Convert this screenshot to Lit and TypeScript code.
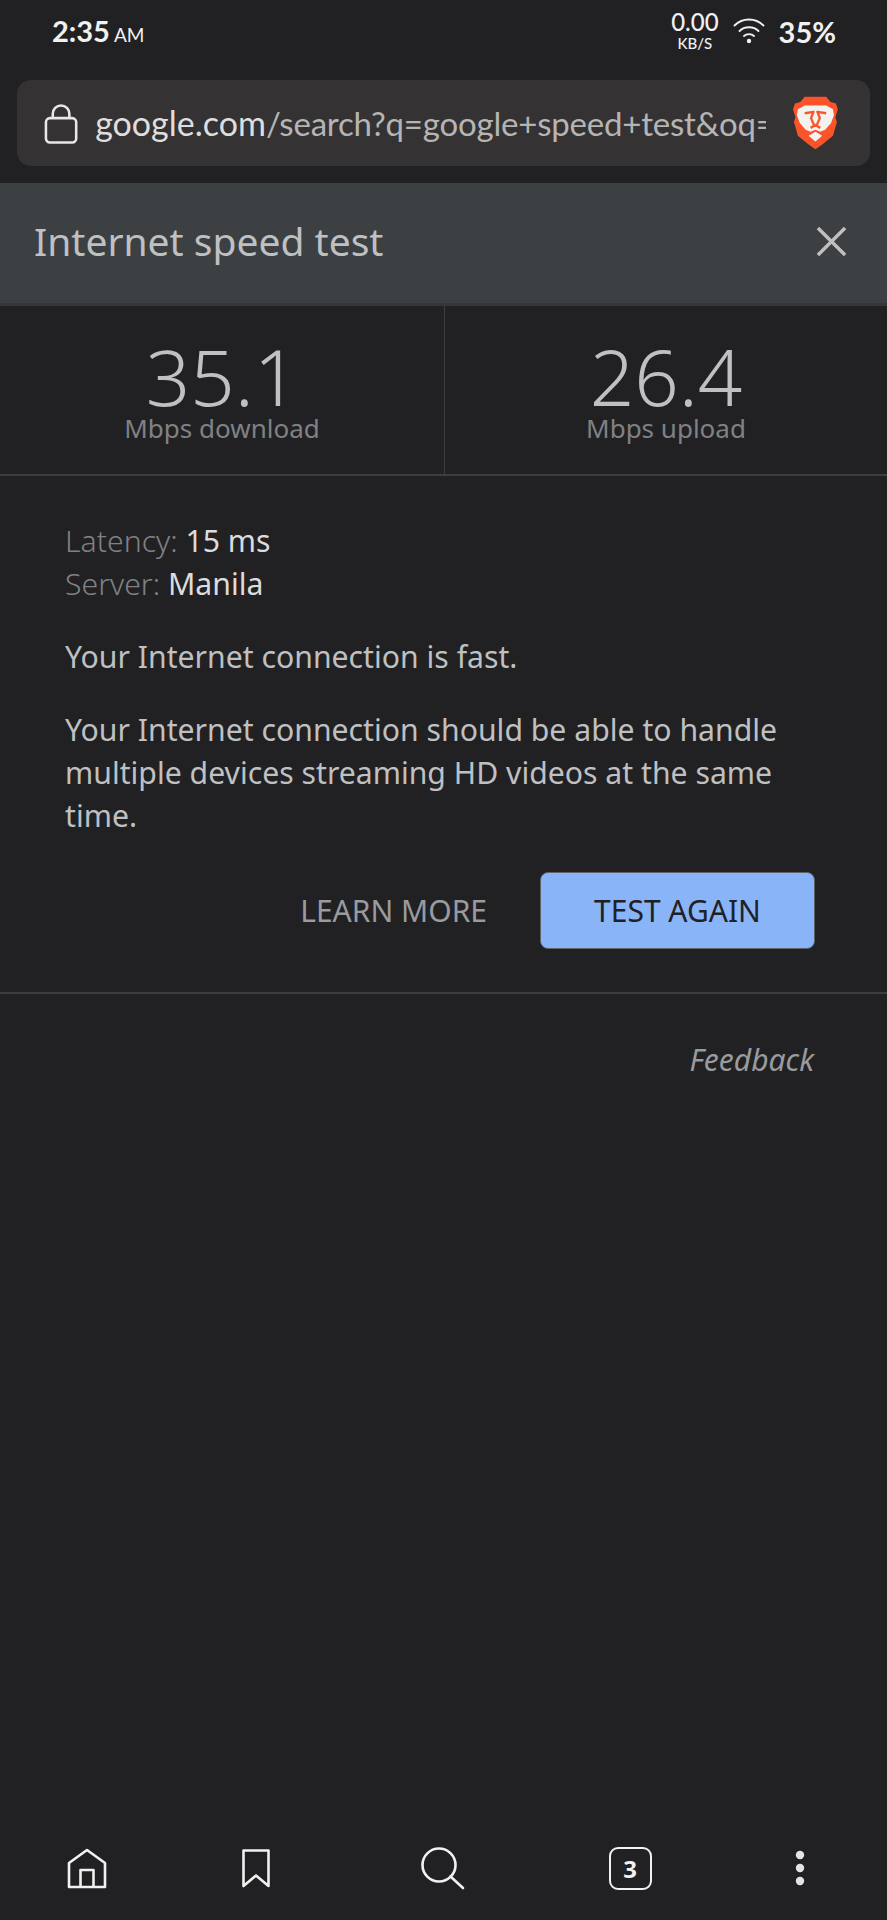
import { LitElement, html, css, svg } from "lit";
import { customElement } from "lit/decorators.js";

const sans = css`"Noto Sans", "Open Sans", sans-serif`;

const lockIcon = svg`<svg width="35" height="41" viewBox="0 0 35 41" fill="none" stroke="#e8e8e8" stroke-width="2.6">
  <rect x="2" y="15" width="31" height="25" rx="4"/>
  <path d="M9 15V10.500a8.500 8.500 0 0 1 17 0V15"/>
</svg>`;

const wifiIcon = svg`<svg width="32" height="26" viewBox="0 0 32 26" fill="none" stroke="#f1f1f1" stroke-width="1.8" stroke-linecap="round">
  <path d="M1.500 7.500C9.500 -0.500 22.500 -0.500 30.500 7.500"/>
  <path d="M6.500 13C11.500 8 20.500 8 25.500 13"/>
  <path d="M11 18C13.500 15.500 18.500 15.500 21 18"/>
  <circle cx="16" cy="23" r="2.200" fill="#f1f1f1" stroke="none"/>
</svg>`;

const braveIcon = svg`<svg width="46" height="56" viewBox="0 0 46 56">
  <path fill="#fb542b" d="M12 1H34L38.500 6.500 44 8 46 14 43.500 22 45 27 41 41 30 50 23 55 16 50 5 41 1 27 2.500 22 0 14 2 8 7.500 6.500Z"/>
  <path fill="#f4f2f0" d="M12 10H34L41 14 42 20 39 28 33 35 28 37 23 35 18 37 13 35 7 28 4 20 5 14Z"/>
  <path fill="none" stroke="#fb542b" stroke-width="2.400" stroke-linejoin="round" d="M12 18L21 16.500 18.500 23 22 31H24L27.500 23 25 16.500 34 18M18 33L23 30 28 33"/>
  <path fill="#f4f2f0" d="M16 41L23 37 30 41 23 47Z"/>
</svg>`;

const homeIcon = svg`<svg width="40" height="41" viewBox="0 0 40 41" fill="none" stroke="#f1f1f1" stroke-width="2.600" stroke-linejoin="round">
  <path d="M2 15L20 2 38 15V39H2Z"/>
  <path d="M13.500 39V22H26.500V39"/>
</svg>`;

const bookmarkIcon = svg`<svg width="28" height="39" viewBox="0 0 28 39" fill="none" stroke="#f1f1f1" stroke-width="2.600" stroke-linejoin="round">
  <path d="M1.500 1.500H26.500V37L14 26.500 1.500 37Z"/>
</svg>`;

const searchIcon = svg`<svg width="44" height="43" viewBox="0 0 44 43" fill="none" stroke="#f1f1f1" stroke-width="2.600" stroke-linecap="round">
  <circle cx="18" cy="18" r="16.500"/>
  <path d="M29.500 29.500L42 41"/>
</svg>`;

const moreIcon = svg`<svg width="10" height="36" viewBox="0 0 10 36" fill="#e4e4e4">
  <circle cx="5" cy="5" r="4.200"/><circle cx="5" cy="18" r="4.200"/><circle cx="5" cy="31" r="4.200"/>
</svg>`;

@customElement("app-root")
export class AppRoot extends LitElement {
  static styles = css`
    :host {
      display: flex;
      flex-direction: column;
      height: 1920px;
      background: #212123;
      font-family: ${sans};
      overflow: hidden;
    }
    .status {
      height: 80px;
      box-sizing: border-box;
      display: flex;
      align-items: center;
      padding: 0 51px 0 52px;
      color: #f1f1f1;
      font-family: "Lato", sans-serif;
    }
    .time {
      font-size: 29px;
      font-weight: 700;
      margin-top: -20px;
    }
    .time small {
      font-size: 19px;
      font-weight: 400;
      margin-left: -3px;
    }
    .status-right {
      margin-left: auto;
      display: flex;
      align-items: center;
      margin-top: -18px;
    }
    .rate {
      display: flex;
      flex-direction: column;
      align-items: center;
      font-size: 24px;
      line-height: 24px;
      font-weight: 500;
      margin-right: 14px;
    }
    .rate small {
      font-size: 15px;
      line-height: 18px;
    }
    .battery {
      font-size: 29px;
      font-weight: 700;
      margin-left: 14px;
    }
    .urlbar {
      height: 86px;
      margin: 0 17px;
      background: #343233;
      border-radius: 14px;
      display: flex;
      align-items: center;
      padding: 0 32px 0 27px;
      box-sizing: border-box;
    }
    .url {
      flex: 0 0 671px;
      margin: -2px 0 0 17px;
      overflow: hidden;
      white-space: nowrap;
      font-family: "Lato", sans-serif;
      font-size: 33px;
      letter-spacing: -0.200px;
      color: #b5b5b5;
    }
    .url b {
      font-weight: 400;
      font-size: 34px;
      letter-spacing: 0;
      color: #dedede;
    }
    .urlbar svg:last-child {
      margin-left: 27px;
    }
    .panel-head {
      margin-top: 17px;
      height: 120px;
      background: #3c4043;
      display: flex;
      align-items: center;
      justify-content: space-between;
      padding: 0 40px 0 34px;
      font-size: 39px;
      color: #bfc0c2;
      border-bottom: 3px solid #353638;
    }
    .panel-head span {
      margin-top: -5px;
    }
    .close {
      width: 31px;
      height: 31px;
      margin-top: -4px;
    }
    .results {
      display: grid;
      grid-template-columns: 444px 1fr;
      height: 168px;
      border-bottom: 2px solid #3c3d3f;
      text-align: center;
    }
    .result + .result {
      border-left: 1px solid #3c3d3f;
    }
    .result {
      padding-top: 28px;
      box-sizing: border-box;
    }
    .value {
      font-size: 78px;
      font-weight: 300;
      line-height: 84px;
      color: #bfc0c2;
    }
    .unit {
      font-size: 26px;
      line-height: 30px;
      color: #808184;
      margin-top: -5px;
    }
    .body {
      padding: 43px 65px 0;
      font-size: 30.200px;
      line-height: 43px;
      color: #bfc0c2;
    }
    .body p {
      margin: 0 0 30px;
    }
    .muted {
      color: #808184;
      font-weight: 300;
    }
    .value-text {
      color: #dcdcde;
    }
    .actions {
      display: flex;
      justify-content: flex-end;
      align-items: center;
      gap: 53px;
      margin: 35px 7px 0 0;
    }
    .learn {
      color: #9a9b9e;
      font-size: 30px;
    }
    .again {
      width: 275px;
      height: 77px;
      box-sizing: border-box;
      background: #8ab4f8;
      color: #202124;
      border: 1px solid #5f6368;
      border-radius: 8px;
      font: 400 30px ${sans};
    }
    .rule {
      margin-top: 43px;
      height: 2px;
      background: #3c3d3f;
    }
    .feedback {
      padding: 46px 73px 0 0;
      text-align: right;
      font-style: italic;
      font-size: 30px;
      line-height: 40px;
      color: #9a9b9e;
    }
    .nav {
      margin-top: auto;
      height: 100px;
      display: grid;
      grid-template-columns: 174px 164px 210px 164px 175px;
      align-items: center;
      justify-items: center;
      padding-bottom: 4px;
      box-sizing: border-box;
    }
    .tabs {
      width: 43px;
      height: 43px;
      box-sizing: border-box;
      border: 2.600px solid #f1f1f1;
      border-radius: 9px;
      display: flex;
      align-items: center;
      justify-content: center;
      color: #f1f1f1;
      font-size: 24px;
      font-weight: 700;
    }
  `;

  render() {
    return html`
      <div class="status">
        <div class="time">2:35 <small>AM</small></div>
        <div class="status-right">
          <div class="rate">0.00<small>KB/S</small></div>
          ${wifiIcon}
          <div class="battery">35%</div>
        </div>
      </div>
      <div class="urlbar">
        ${lockIcon}
        <div class="url"><b>google.com</b>/search?q=google+speed+test&amp;oq=google+speed+test</div>
        ${braveIcon}
      </div>
      <div class="panel-head">
        <span>Internet speed test</span>
        <svg class="close" viewBox="0 0 32 32" fill="none" stroke="#bfc0c2" stroke-width="3.500">
          <path d="M2 2L30 30M30 2L2 30" />
        </svg>
      </div>
      <div class="results">
        <div class="result">
          <div class="value">35.1</div>
          <div class="unit">Mbps download</div>
        </div>
        <div class="result">
          <div class="value">26.4</div>
          <div class="unit">Mbps upload</div>
        </div>
      </div>
      <div class="body">
        <p>
          <span class="muted">Latency:</span> <span class="value-text">15 ms</span><br />
          <span class="muted">Server:</span> <span class="value-text">Manila</span>
        </p>
        <p>Your Internet connection is fast.</p>
        <p>Your Internet connection should be able to handle multiple devices streaming HD videos at the same time.</p>
        <div class="actions">
          <span class="learn">LEARN MORE</span>
          <button class="again">TEST AGAIN</button>
        </div>
      </div>
      <div class="rule"></div>
      <div class="feedback">Feedback</div>
      <div class="nav">
        ${homeIcon} ${bookmarkIcon} ${searchIcon}
        <div class="tabs">3</div>
        ${moreIcon}
      </div>
    `;
  }
}
